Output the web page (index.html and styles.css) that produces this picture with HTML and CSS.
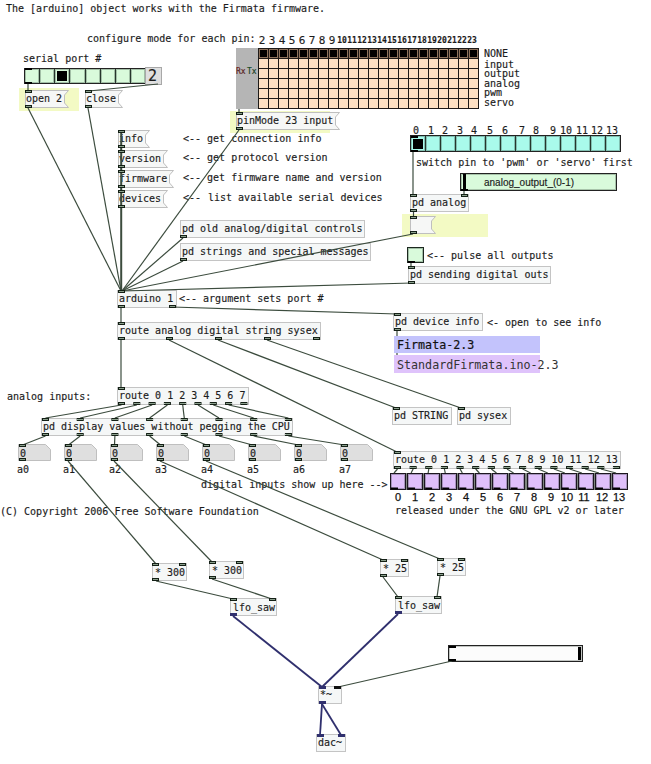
FILE: index.html
```html
<!DOCTYPE html>
<html lang="en">
<head>
<meta charset="utf-8">
<title>arduino patch</title>
<link rel="stylesheet" href="styles.css">
</head>
<body>
<main class="patch" id="patch"></main>
<script src="patch.js"></script>
</body>
</html>
```
FILE: styles.css
```css
* { box-sizing: border-box; }
body { margin: 0; background: #fff; }
.patch {
  position: relative;
  width: 651px;
  height: 764px;
  overflow: hidden;
  font: 10px/12px "DejaVu Sans Mono", monospace;
  color: #1c1c1c;
  -webkit-text-stroke: .15px #1c1c1c;
  white-space: pre;
}
.patch > * { position: absolute; }
.object {
  background: #f5f7f7;
  border: 1px solid #c4c4c4;
  padding-left: 1px;
  line-height: 15px;
}
.low { line-height: 17px; padding-left: 2px; }
.shape { overflow: visible; }
.message { padding-left: 2px; line-height: 17px; }
.flag { fill: #f6f7f6; stroke: #bfbfbf; }
.number { fill: #dfdfdf; stroke: #bfbfbf; }
.highlight { background: #f3fac4; }
.wires { left: 0; top: 0; }
.wire { stroke: #3c4c3e; stroke-width: 1.2; fill: none; }
.signal { stroke: #30306e; stroke-width: 1.8; fill: none; }
.port { fill: #8ba08d; stroke: #142016; }
.port-signal { fill: #30306e; stroke: #30306e; }
.port-black { fill: #111; stroke: #111; }
.nub { fill: #000; }
.radio { display: flex; border: 1px solid #222; gap: 1px; background: #26352c; }
.cell { flex: 1; display: flex; align-items: center; justify-content: center; }
.green .cell, .bang { background: #d9fadb; }
.cyan .cell { background: #a9faeb; }
.radio .cell, .bang, .toggle { box-shadow: inset 0 0 0 1px rgba(20, 40, 30, .28); }
.mark { width: 10px; height: 10px; background: #000; }
.bang { border: 1px solid #1c281f; }
.digit-box { background: #dfdfdf; border: 1px solid #a8a8a8; font-size: 15px; line-height: 16px; padding-left: 2px; }
.matrix { display: grid; grid-template-columns: repeat(22, 9px); grid-template-rows: repeat(6, 9px); gap: 1px; padding: 1px; background: #1d1a18; }
.matrix .cell { background: #fde0c3; }
.matrix .on { background: #8d725c; }
.matrix .mark { width: 7px; height: 7px; }
.uart { background: #b5b5b5; }
.center { transform: translateX(-50%); }
.mode { line-height: 9px; margin-top: 1px; }
.pin { font-size: 11px; }
.tiny { font-size: 8px; font-weight: bold; }
.small { font-size: 8px; }
.rx { color: #722; }
.tx { color: #154d25; }
.sans { font-family: "Liberation Sans", sans-serif; }
.digital { font-family: "Liberation Sans", sans-serif; font-size: 11px; color: #111; -webkit-text-stroke: .25px #111; }
.banner { font-size: 11.68px; line-height: 18px; padding-left: 3px; }
.blue { background: #c3c3fc; color: #111; -webkit-text-stroke: .2px #111; }
.violet { background: #dfc3fb; color: #333; line-height: 20px; -webkit-text-stroke: 0; }
.strip { background: #7d867e; }
.toggles { display: flex; justify-content: space-between; }
.toggle { width: 16px; height: 17px; border: 1px solid #1c1620; background: #dfbffa; }
.slider { border: 1px solid #222; box-shadow: inset 0 0 0 1px rgba(20, 30, 20, .25); }
.slider.output { background: #d9fadb; }
.slider.level { background: #fcfcfc; }
```
FILE: patch.js
```javascript
const patch = document.getElementById('patch');
const NS = 'http://www.w3.org/2000/svg';

function box(cls, x, y, w, h, text) {
  const el = document.createElement('div');
  el.className = cls;
  el.style.left = x + 'px';
  el.style.top = y + 'px';
  if (w) el.style.width = w + 'px';
  if (h) el.style.height = h + 'px';
  if (text) el.textContent = text;
  patch.append(el);
  return el;
}
function svg(cls, w, h) {
  const s = document.createElementNS(NS, 'svg');
  s.setAttribute('class', cls);
  s.setAttribute('width', w);
  s.setAttribute('height', h);
  return s;
}
function shape(parent, tag, attrs) {
  const s = document.createElementNS(NS, tag);
  for (const k in attrs) s.setAttribute(k, attrs[k]);
  parent.append(s);
}
function label(x, baseline, text, cls = '') {
  return box('label ' + cls, x, baseline - 9, 0, 0, text);
}
function cells(parent, count, marked) {
  for (let i = 0; i < count; i++) {
    const c = document.createElement('div');
    c.className = 'cell';
    if (marked(i)) {
      c.classList.add('on');
      const m = document.createElement('div');
      m.className = 'mark';
      c.append(m);
    }
    parent.append(c);
  }
}

const wires = svg('wires', 651, 764);
const wire = (x1, y1, x2, y2, cls = 'wire') =>
  shape(wires, 'path', { class: cls, d: `M${x1} ${y1}L${x2} ${y2}` });
const port = (x, y, cls = 'port') =>
  shape(wires, 'rect', { class: cls, x: x - 3, y: y + .5, width: 6, height: 2 });
const nub = (x, y) => shape(wires, 'rect', { class: 'nub', x, y, width: 7, height: 2 });

[[19, 88, 60, 23], [230, 111, 100, 22], [402, 214, 86, 23]]
  .forEach(r => box('highlight', ...r));

/* x, y, width, text, inlets, outlets, extra class */
const step = (n, x, d) => Array.from({ length: n }, (_, i) => x + d * i);
const displayPorts = step(8, 45.5, 34.7);
const routeOuts = step(9, 121.5, 15.3);
const digitalOuts = step(15, 397.5, 15.64);
const objects = [
  [180, 220, 185, 'pd old analog/digital controls', [], [183.5]],
  [180, 243, 191, 'pd strings and special messages', [], [183.5]],
  [410, 194, 59, 'pd analog', [413.5, 464.5], [413.5]],
  [408, 266, 143, 'pd sending digital outs', [411.5], [411.5]],
  [117, 290, 60, 'arduino 1', [121.5], [121.5, 172.5]],
  [117, 322, 204, 'route analog digital string sysex', [121.5], [121.5, 169.5, 218.5, 267.5, 316.5]],
  [393, 313, 90, 'pd device info', [397.5], [397.5]],
  [392, 407, 60, 'pd STRING', [396.5], []],
  [457, 407, 54, 'pd sysex', [461.5], []],
  [117, 387, 132, 'route 0 1 2 3 4 5 6 7', [121.5], routeOuts],
  [41, 418, 252, 'pd display values without pegging the CPU', displayPorts, displayPorts],
  [393, 451, 228, 'route 0 1 2 3 4 5 6 7 8 9 10 11 12 13', [397.5], digitalOuts],
  [152, 563, 35, '* 300', [155.5, 182.5], [155.5], 'low'],
  [209, 561, 35, '* 300', [212.5, 239.5], [212.5], 'low'],
  [230, 598, 47, 'lfo_saw', [233.5, 272.5], [], 'low'],
  [380, 559, 29, '* 25', [383.5, 404.5], [383.5], 'low'],
  [437, 558, 29, '* 25', [440.5, 461.5], [440.5], 'low'],
  [395, 596, 47, 'lfo_saw', [398.5, 437.5], [], 'low'],
  [318, 686, 24, '*~', [], []],
  [316, 734, 30, 'dac~', [], []],
];
for (const [x, y, w, text, , , extra = ''] of objects) box('object ' + extra, x, y, w, 18, text);

/* x, y, width, text */
const messages = [
  [25, 90, 44, 'open 2'], [85, 90, 38, 'close'], [236, 112, 104, 'pinMode 23 input'],
  [118, 130, 32, 'info'], [118, 150, 50, 'version'], [118, 170, 56, 'firmware'],
  [118, 190, 50, 'devices'], [410, 216, 26, ''],
];
for (const [x, y, w, text] of messages) {
  const s = svg('shape', w, 18);
  s.style.left = x + 'px';
  s.style.top = y + 'px';
  shape(s, 'path', { class: 'flag', d: `M.5 .5H${w - .5}L${w - 4.5} 5V13L${w - .5} 17.5H.5Z` });
  patch.append(s);
  if (text) box('message', x - 1, y, 0, 0, text);
}

for (let i = 0; i < 8; i++) {
  const s = svg('shape', 34, 18);
  s.style.left = 18 + 46 * i + 'px';
  s.style.top = '444px';
  shape(s, 'path', { class: 'number', d: 'M.5 .5H27.5L32.5 5.5V16.5H.5Z' });
  patch.append(s);
  label(20 + 46 * i, 457, '0');
  label(17 + 46 * i, 473, 'a' + i);
}

cells(box('radio green', 24, 68, 122, 16), 8, i => i === 2);
box('digit-box', 145, 67, 17, 18, '2');
cells(box('radio cyan', 410, 135, 211, 17), 14, i => i === 0);
box('uart', 236, 48, 22, 61);
cells(box('matrix', 258, 48, 221, 61), 132, i => i < 22);
box('bang', 407, 247, 17, 16);
box('slider output', 460, 173, 157, 18);
box('slider level', 448, 645, 135, 17);
box('banner blue', 394, 336, 146, 17, 'Firmata-2.3');
box('banner violet', 394, 355, 146, 18, 'StandardFirmata.ino-2.3');
const toggles = box('strip toggles', 390, 473, 238, 17);
for (let i = 0; i < 14; i++) {
  const t = document.createElement('div');
  t.className = 'toggle';
  toggles.append(t);
}

label(6, 12, 'The [arduino] object works with the Firmata firmware.');
label(87, 42, 'configure mode for each pin:');
label(23, 62, 'serial port #');
[['NONE', 57], ['input', 68], ['output', 77], ['analog', 87], ['pwm', 96], ['servo', 106]]
  .forEach(([t, y]) => label(484, y, t, 'mode'));
for (let p = 2; p < 24; p++) label(262 + (p - 2) * 10, 44, String(p), p < 10 ? 'center pin' : 'center tiny');
label(236, 75, 'Rx', 'small rx');
label(247, 75, 'Tx', 'small tx');
label(183, 142, '<-- get connection info');
label(183, 161, '<-- get protocol version');
label(183, 181, '<-- get firmware name and version');
label(183, 201, '<--');
label(208, 201, 'list available serial devices');
[416, 431, 445, 460, 474, 490, 505, 522, 536, 553, 566, 582, 597, 612]
  .forEach((x, i) => label(x, 134, String(i), 'center'));
label(416, 166, "switch pin to 'pwm' or 'servo' first");
label(484, 186, 'analog_output_(0-1)', 'sans');
label(427, 259, '<-- pulse all outputs');
label(179, 302, '<-- argument sets port #');
label(487, 326, '<- open to see info');
label(7, 400, 'analog inputs:');
label(201, 488, 'digital inputs show up here -->');
label(0, 515, '(C) Copyright 2006 Free Software Foundation');
[398, 415, 432, 449, 466, 483, 500, 517, 534, 551, 567, 584, 602, 619]
  .forEach((x, i) => label(x, 500, String(i), 'center digital'));
label(395, 514, 'released under the GNU GPL v2 or later');

[
  [28, 84, 28, 91], [158, 84, 89, 91], [28, 108, 121, 291], [88, 108, 121, 291],
  [120.8, 131, 120.8, 291], [121.6, 131, 121.6, 291],
  [239, 109, 239, 113], [239, 130, 122, 291], [183, 238, 122, 291], [183, 261, 122, 291],
  [413, 234, 122, 291], [412, 283, 122, 291],
  [413, 151, 413, 195], [464, 191, 464, 195], [413.5, 211, 413.5, 217], [411, 262, 411, 267],
  [121, 307, 121, 323], [172, 307, 397, 314], [121, 340, 121, 388],
  [169, 340, 397, 452], [218, 340, 396, 408], [267, 340, 461, 408],
  [397, 331, 397, 336], [397, 353, 397, 355],
  [68, 461, 156, 564], [114, 461, 212, 562], [160, 461, 383, 560], [206, 461, 440, 559],
  [156, 581, 233, 599], [212, 579, 272, 599], [383, 577, 398, 597], [440, 576, 437, 597],
  [452, 661, 338, 687],
].forEach(w => wire(...w));
displayPorts.forEach((x, i) => {
  wire(routeOuts[i], 405, x, 418);
  wire(x, 436, 22.5 + 46 * i, 445);
});
for (let i = 0; i < 14; i++) wire(digitalOuts[i], 469, 394 + 17.08 * i, 473);
[[233, 616, 322, 687], [398, 614, 322, 687], [322, 704, 320, 735], [322, 704, 341, 735]]
  .forEach(w => wire(...w, 'signal'));

for (const [, y, , , ins, outs] of objects) {
  ins.forEach(x => port(x, y));
  outs.forEach(x => port(x, y + 15));
}
messages.forEach(([x, y]) => { port(x + 3.5, y); port(x + 3.5, y + 15); });
for (let i = 0; i < 8; i++) { port(22.5 + 46 * i, 444); port(22.5 + 46 * i, 458); }
[[233.5, 613], [398.5, 611], [322.5, 686], [322.5, 701], [320.5, 734], [341.5, 734]]
  .forEach(([x, y]) => port(x, y, 'port-signal'));
port(337.5, 686, 'port-black');
[[25, 68], [25, 82], [411, 136], [411, 150], [408, 261], [461, 189], [449, 646], [449, 659]]
  .forEach(p => nub(...p));
for (let i = 0; i < 14; i++) nub(391 + 17.08 * i, 487.5);
shape(wires, 'rect', { class: 'nub', x: 463, y: 174, width: 3, height: 16 });
shape(wires, 'rect', { class: 'nub', x: 578, y: 647, width: 3, height: 13 });
patch.append(wires);
```
